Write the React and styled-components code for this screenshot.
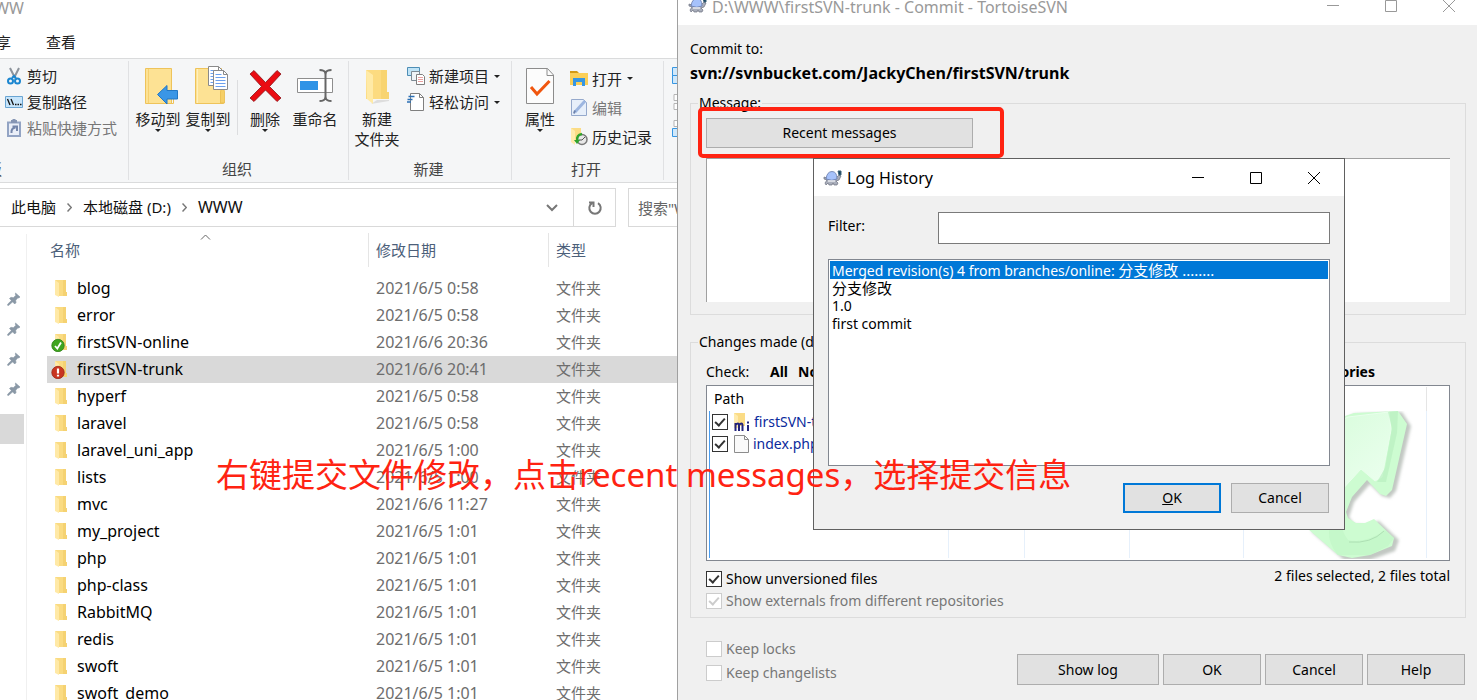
import React from "react";
import styled, { createGlobalStyle, css } from "styled-components";

const LATIN = `"Noto Sans", "Noto Sans CJK SC", sans-serif`;

const Global = createGlobalStyle`
  *, *::before, *::after { box-sizing: border-box; }
  body { margin: 0; background: #fff; overflow: hidden; font: 15px/20px ${LATIN}; color: #000; }
  button, input, textarea { font: inherit; color: inherit; margin: 0; border-radius: 0; }
  button { padding: 0; border: 0; background: none; white-space: nowrap; }
`;

const Desktop = styled.div`
  position: relative;
  display: grid;
  grid-template-columns: 677fr 800fr;
  height: 100vh;
  overflow: hidden;
  white-space: nowrap;
`;

/* ---------- Explorer ---------- */

const Explorer = styled.section`
  display: flex;
  flex-direction: column;
  min-width: 0;
  overflow: hidden;
  background: #fff;
`;

const ExplorerTitle = styled.div`
  display: flex;
  justify-content: flex-end;
  width: 24px;
  height: 28px;
  font-size: 16px;
  line-height: 16px;
  color: #999;
  overflow: hidden;
`;

const Tabs = styled.nav`
  display: flex;
  align-items: flex-start;
  gap: 35px;
  height: 30px;
  padding-top: 4px;
  color: #222;
`;

const Tab = styled.button`
  display: flex;
  justify-content: flex-end;
  width: ${(p) => (p.$clipped ? "11px" : "auto")};
  overflow: hidden;
`;

const RibbonBar = styled.div`
  display: flex;
  flex: none;
  height: 125px;
  border-top: 1px solid #dadbdc;
  border-bottom: 1px solid #dadbdc;
  background: #f5f6f7;
  padding: 2px 0;
  overflow: hidden;
`;

const Group = styled.div`
  display: flex;
  flex-direction: column;
  flex: none;
  width: ${(p) => p.$w}px;
  border-right: 1px solid #e0e1e3;
`;

const GroupBody = styled.div`
  display: flex;
  flex: 1;
  padding-left: ${(p) => p.$pad || 0}px;
`;

const GroupLabel = styled.div`
  display: flex;
  justify-content: ${(p) => (p.$clipped ? "flex-end" : "center")};
  width: ${(p) => (p.$clipped ? "2px" : "auto")};
  padding: ${(p) => (p.$clipped ? "0 0 1px" : "0 3px 1px 0")};
  overflow: hidden;
  color: #444;
`;

const BigButton = styled.button`
  display: flex;
  flex-direction: column;
  align-items: center;
  align-self: flex-start;
  width: 50px;
  padding-top: 5px;
  color: #222;
  svg { flex: none; margin-bottom: 3px; }
`;

const Caret = styled.i`
  border: 3px solid transparent;
  border-top-color: #222;
  border-bottom: 0;
`;

const Divider = styled.i`
  width: 1px;
  height: 55px;
  margin: 19px 2px 0 4px;
  background: #dcdddf;
`;

const SmallColumn = styled.div`
  display: flex;
  flex-direction: column;
  padding: ${(p) => (p.$wide ? "3px 0 0 5px" : "2px 0 0 5px")};
`;

const SmallButton = styled.button`
  display: flex;
  align-items: center;
  gap: 4px;
  height: ${(p) => (p.$tall ? 29 : 26)}px;
  color: ${(p) => (p.$dim ? "#777" : "#222")};
  i { margin-left: 1px; }
`;

const ViewIcons = styled.div`
  display: flex;
  padding: 6px 0 0 8px;
`;

const AddressRow = styled.div`
  display: flex;
  flex: none;
  gap: 12px;
  height: 39px;
  margin-top: 5px;
`;

const Address = styled.div`
  display: flex;
  flex: none;
  width: 616px;
  border: 1px solid #d9d9d9;
  border-left: 0;
`;

const Crumbs = styled.div`
  display: flex;
  align-items: center;
  flex: 1;
  gap: 11px;
  padding-bottom: 1px;
  svg { flex: none; }
`;

const Crumb = styled.a`
  color: #111;
  text-decoration: none;
  font-size: ${(p) => (p.$latin ? 16 : 15)}px;
`;

const AddressButton = styled.button`
  display: grid;
  place-items: center;
  width: 42px;
  border-left: ${(p) => (p.$line ? "1px solid #d9d9d9" : "0")};
`;

const SearchBox = styled.input`
  flex: 1;
  min-width: 0;
  border: 1px solid #d9d9d9;
  border-right: 0;
  padding: 0 0 0 9px;
  background: #fff;
  &::placeholder { color: #666; opacity: 1; }
`;

const ExplorerBody = styled.div`
  display: flex;
  flex: 1;
  min-height: 0;
  overflow: hidden;
`;

const QuickAccess = styled.aside`
  flex: none;
  width: 27px;
  margin-top: 7px;
  border-right: 1px solid #f0f0f0;
`;

const Pins = styled.div`
  display: flex;
  flex-direction: column;
  padding: 50px 0 10px 7px;
  svg { margin: 8px 0; }
`;

const NavSelected = styled.div`
  width: 24px;
  height: 30px;
  background: #d9d9d9;
`;

const FileTable = styled.table`
  flex: 1;
  align-self: flex-start;
  margin-left: 20px;
  table-layout: fixed;
  width: 100px;
  border-collapse: separate;
  border-spacing: 0;
`;

const HeadCell = styled.th`
  width: ${(p) => p.$w || "auto"};
  padding: 6px 0 8px;
  font-weight: 400;
  text-align: left;
  color: #4c607a;
  position: relative;
  > svg { position: absolute; left: 153px; top: 7px; }
`;

const HeadLabel = styled.div`
  height: 34px;
  line-height: 34px;
  padding-left: ${(p) => (p.$first ? 3 : 7)}px;
  border-left: ${(p) => (p.$first ? 0 : 1)}px solid #e5e5e5;
`;

const FileRow = styled.tr`
  background: ${(p) => (p.$selected ? "#d9d9d9" : "transparent")};
`;

const FileCell = styled.td`
  height: 27px;
  padding: 0 0 0 8px;
  line-height: 27px;
  font-size: ${(p) => (p.$type ? 15 : 16)}px;
  color: #6d6d6d;
`;

const FileName = styled.div`
  display: flex;
  align-items: center;
  gap: 9px;
  margin-left: -4px;
  color: #000;
`;

/* ---------- Dialog parts ---------- */

const TitleBar = styled.header`
  display: flex;
  flex: none;
  gap: 2px;
  align-items: ${(p) => (p.$clipped ? "flex-start" : "center")};
  height: ${(p) => (p.$clipped ? 25 : 37)}px;
  padding-left: ${(p) => (p.$clipped ? 10 : 9)}px;
  padding-right: ${(p) => (p.$clipped ? 0 : 2)}px;
  background: #fff;
  color: ${(p) => (p.$clipped ? "#999" : "#000")};
  overflow: hidden;
  h1 {
    flex: 1;
    margin: 0 0 0 3px;
    font-size: 16px;
    font-weight: 400;
    line-height: ${(p) => (p.$clipped ? 14 : 24)}px;
  }
`;

const WindowButton = styled.button`
  display: grid;
  place-items: center;
  width: 56px;
  height: 12px;
`;

const CommitWindow = styled.section`
  position: relative;
  display: flex;
  flex-direction: column;
  min-width: 0;
  border-left: 1px solid #a0a0a0;
  background: #f0f0f0;
  font-size: 14px;
`;

const CommitBody = styled.div`
  padding: 12px 11px 0 12px;
`;

const CommitTarget = styled.div`
  line-height: 24px;
  margin-bottom: 8px;
  b {
    display: block;
    font-size: 16px;
  }
`;

const Frame = styled.fieldset`
  min-width: 0;
  margin: 0 0 ${(p) => p.$gap || 0}px;
  padding: ${(p) => p.$top}px 15px ${(p) => p.$bottom}px;
  border: 1px solid #dcdcdc;
  legend { margin-left: -8px; padding: 0 1px; line-height: 20px; }
`;

const PushButton = styled.button`
  width: ${(p) => p.$w || 98}px;
  height: ${(p) => p.$h || 30}px;
  border: ${(p) => (p.$primary ? "2px solid #0078d7" : "1px solid #adadad")};
  background: #e1e1e1;
`;

const MessageBox = styled.textarea`
  display: block;
  width: 100%;
  height: 144px;
  margin-top: 10px;
  border: 0;
  border-top: 1px solid #a0a0a0;
  border-left: 1px solid #a0a0a0;
  background: #fff;
  resize: none;
  outline: 0;
`;

const CheckRow = styled.div`
  display: flex;
  line-height: 20px;
  > span { flex: none; width: 64px; }
`;

const CheckLinks = styled.div`
  display: flex;
  gap: 10px;
  width: 605px;
  button { font-weight: 700; }
  button:last-child { margin-left: auto; }
`;

const PathList = styled.div`
  position: relative;
  display: flex;
  height: 176px;
  margin-top: 3px;
  border: 1px solid #828790;
  background: #fff;
  overflow: hidden;
`;

const Watermark = styled.svg`
  position: absolute;
  right: 34px;
  bottom: 1px;
`;

const PathTable = styled.table`
  position: relative;
  width: 100%;
  height: 174px;
  padding: 1px 0 2px 2px;
  table-layout: fixed;
  border-collapse: separate;
  border-spacing: 0;
`;

const PathHead = styled.th`
  width: ${(p) => (p.$w ? p.$w + "px" : "auto")};
  height: 24px;
  padding: 0 0 0 5px;
  text-align: left;
  font-weight: 400;
  border-right: ${(p) => (p.$w ? "1px solid #e5e5e5" : "0")};
`;

const PathCell = styled.td`
  height: 22px;
  padding: 0 0 0 ${(p) => (p.$first ? 2 : 6)}px;
  border-left: ${(p) => (p.$first ? "1px solid #4a9df0" : "0")};
  border-right: ${(p) => (p.$last ? "0" : "1px solid #e6f0fb")};
`;

const FillerRow = styled.tr`
  td { height: auto; }
`;

const Check = styled.label`
  display: flex;
  align-items: center;
  gap: 4px;
  height: ${(p) => p.$h || 22}px;
  color: ${(p) => (p.$off ? "#777" : p.$link ? "#0a2a9c" : "#000")};
  svg { flex: none; margin-left: 2px; }
`;

const Tick = styled.input.attrs({ type: "checkbox" })`
  appearance: none;
  position: relative;
  flex: none;
  width: 16px;
  height: 16px;
  border: 1px solid #333;
  background: #fff;
  &:checked::after {
    content: "";
    position: absolute;
    left: 4px;
    top: 1px;
    width: 6px;
    height: 10px;
    border: solid #333;
    border-width: 0 2px 2px 0;
    transform: rotate(42deg);
  }
  &:disabled { border-color: #ccc; }
  &:disabled::after { border-color: #ccc; }
`;

const FrameFooter = styled.div`
  display: flex;
  justify-content: space-between;
  align-items: flex-start;
  padding-top: 7px;
`;

const Summary = styled.div`
  line-height: 16px;
`;

const Actions = styled.div`
  display: flex;
  gap: 4px;
  padding-top: 17px;
`;

const BottomBar = styled.div`
  display: flex;
  justify-content: space-between;
  padding: 19px 1px 0 16px;
`;

const Highlight = styled.div`
  position: absolute;
  left: 20px;
  top: 107px;
  width: 306px;
  height: 51px;
  border: 4px solid #ff2312;
  border-radius: 5px;
  pointer-events: none;
`;

const LogDialog = styled.section`
  position: absolute;
  left: 135px;
  top: 158px;
  width: 532px;
  border: 1px solid #606060;
  background: #f0f0f0;
`;

const LogBody = styled.div`
  padding: 16px 14px;
`;

const FilterRow = styled.div`
  display: flex;
  align-items: flex-start;
  label { flex: 1; line-height: 28px; }
  input {
    width: 392px;
    height: 32px;
    border: 1px solid #7a7a7a;
    background: #fff;
  }
`;

const LogList = styled.ul`
  height: 207px;
  margin: 15px 0 17px;
  padding: 1px;
  border: 1px solid #828790;
  background: #fff;
  list-style: none;
`;

const LogItem = styled.li`
  height: 18px;
  padding-left: 2px;
  line-height: 18px;
  span { font-size: 15px; }
  ${(p) =>
    p.$selected &&
    css`
      background: #0078d7;
      color: #fff;
    `}
`;

const LogActions = styled.div`
  display: flex;
  justify-content: flex-end;
  gap: 10px;
  padding-right: 1px;
`;

const Caption = styled.p`
  position: absolute;
  left: 216px;
  top: 455px;
  margin: 0;
  font-size: 33px;
  line-height: 40px;
  color: #ff2312;
`;

/* ---------- Icons ---------- */

const Chevron = () => (
  <svg width="5" height="9" viewBox="0 0 5 9" fill="none" stroke="#777" strokeWidth="1.5"><path d="M.5.5 4.300 4.500.5 8.500" /></svg>
);

const Folder = ({ badge }) => (
  <svg width="17" height="19" viewBox="0 0 17 19">
    <path d="M4 1h11v12h1v4H8z" fill="#fadb82" />
    <path d="M12 1h3v12h1v4h-4z" fill="#f5d272" />
    <path d="M4 1l4 3v14l-4-2z" fill="#ffe9a6" />
    {badge && <circle cx="7" cy="12.500" r="6.200" fill={badge === "ok" ? "#3fa51f" : "#c93420"} stroke={badge === "ok" ? "#2c7d14" : "#982817"} strokeWidth=".8" />}
    {badge === "ok" && <path d="M4 13l2.300 2.500L10 9.500" fill="none" stroke="#fff" strokeWidth="1.800" />}
    {badge === "modified" && <path d="M7 8.500v5M7 14.700v1.700" stroke="#fff" strokeWidth="2.200" />}
  </svg>
);

const Pin = () => (
  <svg width="14" height="14" viewBox="0 0 14 14" fill="#8a98a6" stroke="#8a98a6" strokeWidth=".6">
    <path d="M8.500 1l4.500 4-1.200 1-.8-.3-2.300 2.500.3 2.500-1.300 1.300L2.500 6.500 4 5.300l2.300.4 2.500-2.300-.4-1z" />
    <path d="M5 8l1.300 1.300L1.500 13.500l-.9-.2.2-1.300z" />
  </svg>
);

const BigFolder = ({ children }) => (
  <svg width="42" height="40" viewBox="0 0 42 40">{children}</svg>
);

const FolderBody = () => (
  <>
    <path d="M8.500 2.500h26v30h2v5h-28z" fill="#fde294" stroke="#eec35a" />
    <path d="M10.500 3v34" stroke="#fff0bd" />
    <path d="M33.500 37v-11q0-3 2-3t2 3v11z" fill="#f6cf66" stroke="#e9bb4c" strokeWidth=".8" />
  </>
);

const Sheet = ({ x, y }) => (
  <g transform={`translate(${x} ${y})`}>
    <path d="M.5.500h10l4 4v15H.5z" fill="#fff" stroke="#8a8a8a" />
    <path d="M10.500.5v4h4" fill="none" stroke="#8a8a8a" />
    <path d="M2.500 4.500h6M2.500 7.500h10M2.500 10.500h10M2.500 13.500h10M2.500 16.500h10" stroke="#6ba0ee" />
  </g>
);

const MoveIcon = () => (
  <BigFolder>
    <path d="M8.500 2.500h26v35h-26z" fill="#fde294" stroke="#eec35a" /><path d="M11.500 3v34" stroke="#f6d06f" />
    <path d="M36.500 24v13.500h-3" fill="none" stroke="#eec35a" />
    <path d="M20.500 28.500l9.500-9v5h10.500v8.500H30v5z" fill="#3a96e6" stroke="#2277c4" />
  </BigFolder>
);

const CopyIcon = () => (
  <BigFolder>
    <FolderBody />
    <Sheet x={21} y={0} />
    <Sheet x={26} y={4} />
  </BigFolder>
);

const DeleteIcon = () => (
  <svg width="36" height="40" viewBox="0 0 36 40">
    <path d="M3 8l4-3.500 11.500 12L30 4.500 34 8 22.500 20.500 34 32l-4 3.500L18.500 24 7 35.500 3 32l11.500-11.500z" fill="#ea0c12" stroke="#8d1015" strokeWidth=".8" />
  </svg>
);

const RenameIcon = () => (
  <svg width="38" height="40" viewBox="0 0 38 40" fill="none">
    <path d="M1.500 12.500h35v14h-35z" fill="#fff" stroke="#8e8e8e" />
    <path d="M4 15h18v9H4z" fill="#2f93e6" />
    <path d="M29.500 5v29" stroke="#666" strokeWidth="2" />
    <path d="M23.500 4q5 0 6 3 1-3 6-3M23.500 35q5 0 6-3 1 3 6 3" stroke="#666" strokeWidth="2" />
  </svg>
);

const NewFolderIcon = () => (
  <svg width="28" height="40" viewBox="0 0 28 40">
    <path d="M8 38l6-4h12v1z" fill="#ddd" />
    <path d="M3 4h21v22l2 2v5H3z" fill="#fcdb80" />
    <path d="M18 4h6v22h2v7h-8z" fill="#f8d471" />
    <path d="M3 4l7 5v29l-6-5z" fill="#ffeaa6" />
  </svg>
);

const PropertiesIcon = () => (
  <svg width="30" height="40" viewBox="0 0 30 40" fill="none">
    <path d="M1.500 2.500h21l6 6.500v28.500h-27z" fill="#fcfcfc" stroke="#8c8c8c" />
    <path d="M22 2.500V9.500h6.500" stroke="#8c8c8c" />
    <path d="M6 21l6 7L24.500 15" stroke="#f0560f" strokeWidth="3" />
  </svg>
);

const CutIcon = () => (
  <svg width="18" height="18" viewBox="0 0 18 18" fill="none">
    <path d="M5 1l5 10M14 1L9 11" stroke="#8d949c" strokeWidth="2" />
    <circle cx="5.500" cy="14" r="2.500" stroke="#1b86d0" strokeWidth="2" />
    <circle cx="12.500" cy="14" r="2.500" stroke="#1b86d0" strokeWidth="2" />
    <path d="M7 11l2-2 2 2" stroke="#1b86d0" strokeWidth="2" />
  </svg>
);

const CopyPathIcon = () => (
  <svg width="18" height="12" viewBox="0 0 18 12" fill="none">
    <path d="M.5.500h17v11H.5z" fill="#c7e5fb" stroke="#6aa5d3" />
    <path d="M2.500 3l2.500 6M6 3l2.500 6M10 8.500h1.500M12.500 8.500H14M15 8.500h1.500" stroke="#111" strokeWidth="1.300" />
  </svg>
);

const PasteLinkIcon = () => (
  <svg width="18" height="20" viewBox="0 0 18 20" fill="none">
    <path d="M3 4.500h12V18H3z" fill="#e9eef8" stroke="#93a4c4" strokeWidth="2" />
    <path d="M6 3.500h6M9 1v4" stroke="#8595b4" strokeWidth="3" />
    <path d="M6.500 15q-.5-5 4-5.500M7.500 8.500H12V13" stroke="#7486ab" strokeWidth="2" />
  </svg>
);

const NewItemIcon = () => (
  <svg width="18" height="18" viewBox="0 0 18 18" fill="none">
    <path d="M.5.500h12v8H.5z" fill="#bfe3f6" stroke="#4d8db5" />
    <path d="M4.500 4.500h8v9h-8z" fill="#eef3f7" stroke="#7d8a94" />
    <path d="M9.500 7.500h6l2 2v8h-8z" fill="#fff" stroke="#7f7f7f" />
    <path d="M11 10.500h5M11 12.500h5M11 14.500h5" stroke="#e8a0a0" />
  </svg>
);

const EasyAccessIcon = () => (
  <svg width="18" height="18" viewBox="0 0 18 18" fill="none">
    <path d="M3.500.500h9l4 4v13h-13z" fill="#fff" stroke="#7f7f7f" />
    <path d="M12.500.5v4h4" stroke="#7f7f7f" />
    <path d="M1.500 3.500h6M.5 6.500h5M0 9h4" stroke="#2a6fb5" strokeWidth="1.500" />
  </svg>
);

const OpenIcon = () => (
  <svg width="18" height="17" viewBox="0 0 18 17">
    <path d="M0 1h7l2 2H0z" fill="#d39a16" />
    <path d="M0 3h18v12H0z" fill="#fbcf57" />
    <path d="M3 16V8h12v8h-3v-4H6v4z" fill="#3796e2" />
  </svg>
);

const EditIcon = () => (
  <svg width="18" height="19" viewBox="0 0 18 19" fill="none">
    <path d="M1.500 1.500h12l3 3v13h-15z" fill="#e7effa" stroke="#95a9cc" />
    <path d="M5 14L15 3" stroke="#9db6e0" strokeWidth="3" />
    <path d="M4 15.500l1-3" stroke="#6c82ad" strokeWidth="2" />
  </svg>
);

const HistoryIcon = () => (
  <svg width="18" height="19" viewBox="0 0 18 19" fill="none">
    <path d="M1 1h10v14H1z" fill="#fbdc86" />
    <path d="M1 1l4 3v14l-4-3z" fill="#ffebac" />
    <circle cx="12" cy="12.500" r="5" fill="#e8e8e8" stroke="#7a7a7a" strokeWidth="1.500" />
    <path d="M12 13l3-3M12 13h-3" stroke="#555" />
    <path d="M12 7q-6 1-4.500 6.500" stroke="#2fa32c" strokeWidth="2.500" />
    <path d="M4 13h6l-3 4z" fill="#2fa32c" />
  </svg>
);

const PaneIcons = () => (
  <svg width="12" height="76" viewBox="0 0 12 76" fill="#cfe8fb" stroke="#3796e2">
    <path d="M.5.500h14v8H.5zM.5 8.500h14v8H.5z" />
    <path d="M2 27.500h12v6H2zM2 36.500h12v6H2z" fill="#fff" stroke="#b5b5b5" />
    <path d="M2 53.500h12v6H2z" fill="#fff" stroke="#b5b5b5" />
    <path d="M.5 61.500h14v8H.5z" />
  </svg>
);

const Turtle = ({ clipped }) => (
  <svg width="19" height={clipped ? 13 : 16} viewBox={clipped ? "0 3 19 13" : "0 0 19 16"}>
    <path d="M1 7l3 1 10-1 2-2 2 1-2 4-3 1 2 2-1 2h-3l-1-2-1 2H6l-1-2-2 2-1-2 2-3-3-1z" fill="#a9aebb" stroke="#6b7080" strokeWidth=".7" />
    <path d="M3 9Q4 1.500 9 1.500T14 9q-5 2.500-11 0z" fill="#a6c2fb" stroke="#6478a8" strokeWidth=".8" />
    <path d="M5 11h7" stroke="#e8eaef" strokeWidth="1.500" />
    <path d="M15 1h3v4h-2z" fill="#16445f" stroke="#3b6076" />
  </svg>
);

const WindowControls = ({ color }) => (
  <>
    <WindowButton aria-label="Minimize"><svg width="12" height="12"><path d="M0 5.500h12" stroke={color} /></svg></WindowButton>
    <WindowButton aria-label="Maximize"><svg width="12" height="12"><path d="M.5.500h11v11H.5z" fill="none" stroke={color} /></svg></WindowButton>
    <WindowButton aria-label="Close"><svg width="12" height="12"><path d="M0 0l12 12M12 0L0 12" stroke={color} /></svg></WindowButton>
  </>
);

const MergeFolder = () => (
  <svg width="16" height="19" viewBox="0 0 16 19" fill="none">
    <path d="M0 0h11v13H0z" fill="#fbdc86" />
    <path d="M0 0l4 3v12H0z" fill="#ffebac" />
    <path d="M1.500 18v-8M1.500 12q3-3 3.500 0v6M5 12q3-3 3.500 0v6M14 12v6M14 8.500v2" stroke="#23237c" strokeWidth="2" />
  </svg>
);

const PageIcon = () => (
  <svg width="15" height="18" viewBox="0 0 15 18" fill="#fafafa" stroke="#8c8c8c">
    <path d="M.5.500h10l4 4v13H.5z" /><path d="M10.500.5v4h4" fill="none" />
  </svg>
);

const ArrowMark = () => (
  <Watermark width="140" height="148" viewBox="1275 411 140 148" aria-hidden="true">
    <defs>
      <linearGradient id="face" x1="0" y1="0" x2="1" y2="1">
        <stop offset="0" stopColor="#d4fcd8" /><stop offset="1" stopColor="#edfff0" />
      </linearGradient>
      <filter id="soft" x="-10%" y="-10%" width="130%" height="130%"><feGaussianBlur stdDeviation="1.500" /></filter>
    </defs>
    <path d="M1300 440L1352 413 1400 411 1409 425 1394 490 1388 497 1380 495 1368 483 1352 501 1347 516 1352 523 1363 524 1377 520 1397 539 1393 550 1368 559 1342 559 1310 531z" fill="#c2c8c3" filter="url(#soft)" transform="translate(2 1)" />
    <path d="M1300 440L1345 416 1354 413 1398 411 1407 424 1392 490 1386 496 1380 494 1367 480 1352 497 1346 512 1348 518 1356 523 1365 523 1374 519 1394 538 1392 546 1370 555 1352 558 1338 555 1308 529z" fill="#cdfcd1" />
    <path d="M1300 440L1348 417 1389 412 1391 430 1382 477 1375 481 1361 469 1340 492z" fill="url(#face)" stroke="#e9ffec" />
    <path d="M1398 411l-1 22-11 49-9 0 8-14 7-40-4-16z" fill="#b9efc0" opacity=".7" />
    <path d="M1345 510q-8 15 3 30 18 4 37-10l9 8-6 8-18 9-32 0q-12-14-8-30z" fill="#bff5c5" opacity=".6" />
    <path d="M1349 542q22 2 35-11" fill="none" stroke="#aee0b4" />
  </Watermark>
);

const files = [
  ["blog", "2021/6/5 0:58"], ["error", "2021/6/5 0:58"], ["firstSVN-online", "2021/6/6 20:36", "ok"],
  ["firstSVN-trunk", "2021/6/6 20:41", "modified"], ["hyperf", "2021/6/5 0:58"], ["laravel", "2021/6/5 0:58"],
  ["laravel_uni_app", "2021/6/5 1:00"], ["lists", "2021/6/5 1:00"], ["mvc", "2021/6/6 11:27"],
  ["my_project", "2021/6/5 1:01"], ["php", "2021/6/5 1:01"], ["php-class", "2021/6/5 1:01"],
  ["RabbitMQ", "2021/6/5 1:01"], ["redis", "2021/6/5 1:01"], ["swoft", "2021/6/5 1:01"], ["swoft_demo", "2021/6/5 1:01"],
];

const Ribbon = () => (
  <RibbonBar>
    <Group $w={129}>
      <GroupBody>
        <SmallColumn>
          <SmallButton><CutIcon />剪切</SmallButton>
          <SmallButton><CopyPathIcon />复制路径</SmallButton>
          <SmallButton $dim><PasteLinkIcon />粘贴快捷方式</SmallButton>
        </SmallColumn>
      </GroupBody>
      <GroupLabel $clipped>剪贴板</GroupLabel>
    </Group>
    <Group $w={220}>
      <GroupBody $pad={4}>
        <BigButton><MoveIcon />移动到<Caret /></BigButton>
        <BigButton><CopyIcon />复制到<Caret /></BigButton>
        <Divider />
        <BigButton><DeleteIcon />删除<Caret /></BigButton>
        <BigButton><RenameIcon />重命名</BigButton>
      </GroupBody>
      <GroupLabel>组织</GroupLabel>
    </Group>
    <Group $w={163}>
      <GroupBody $pad={3}>
        <BigButton><NewFolderIcon />新建<br />文件夹</BigButton>
        <SmallColumn>
          <SmallButton><NewItemIcon />新建项目<Caret /></SmallButton>
          <SmallButton><EasyAccessIcon />轻松访问<Caret /></SmallButton>
        </SmallColumn>
      </GroupBody>
      <GroupLabel>新建</GroupLabel>
    </Group>
    <Group $w={152}>
      <GroupBody $pad={3}>
        <BigButton><PropertiesIcon />属性<Caret /></BigButton>
        <SmallColumn $wide>
          <SmallButton $tall><OpenIcon />打开<Caret /></SmallButton>
          <SmallButton $tall $dim><EditIcon />编辑</SmallButton>
          <SmallButton $tall><HistoryIcon />历史记录</SmallButton>
        </SmallColumn>
      </GroupBody>
      <GroupLabel>打开</GroupLabel>
    </Group>
    <ViewIcons><PaneIcons /></ViewIcons>
  </RibbonBar>
);

const ExplorerPane = () => (
  <Explorer>
    <ExplorerTitle>WWW</ExplorerTitle>
    <Tabs><Tab $clipped>共享</Tab><Tab>查看</Tab></Tabs>
    <Ribbon />
    <AddressRow>
      <Address>
        <Crumbs>
          <span />
          <Crumb href="#pc">此电脑</Crumb><Chevron />
          <Crumb href="#d">本地磁盘 (D:)</Crumb><Chevron />
          <Crumb href="#www" $latin>WWW</Crumb>
        </Crumbs>
        <AddressButton aria-label="Previous locations">
          <svg width="12" height="8" fill="none" stroke="#777" strokeWidth="2"><path d="M1 1l5 5 5-5" /></svg>
        </AddressButton>
        <AddressButton $line aria-label="Refresh">
          <svg width="16" height="16" viewBox="0 0 16 16" fill="none" stroke="#777" strokeWidth="2"><path d="M5 3.200a5.700 5.700 0 1 0 6 0M2 2.500h4.500V7" /></svg>
        </AddressButton>
      </Address>
      <SearchBox aria-label="搜索" placeholder={'搜索"WWW"'} />
    </AddressRow>
    <ExplorerBody>
      <QuickAccess>
        <Pins><Pin /><Pin /><Pin /><Pin /></Pins>
        <NavSelected />
      </QuickAccess>
      <FileTable>
        <thead>
          <tr>
            <HeadCell $w="321px">
              <svg width="11" height="6" fill="none" stroke="#666"><path d="M1 5.500l4.500-4.500L10 5.500" /></svg>
              <HeadLabel $first>名称</HeadLabel>
            </HeadCell>
            <HeadCell $w="180px"><HeadLabel>修改日期</HeadLabel></HeadCell>
            <HeadCell><HeadLabel>类型</HeadLabel></HeadCell>
          </tr>
        </thead>
        <tbody>
          {files.map(([name, date, badge]) => (
            <FileRow key={name} $selected={badge === "modified"}>
              <FileCell><FileName><Folder badge={badge} />{name}</FileName></FileCell>
              <FileCell>{date}</FileCell>
              <FileCell $type>文件夹</FileCell>
            </FileRow>
          ))}
        </tbody>
      </FileTable>
    </ExplorerBody>
  </Explorer>
);

const PathCells = () => (
  <><PathCell /><PathCell /><PathCell /><PathCell /><PathCell $last /></>
);

const Log = () => (
  <LogDialog role="dialog" aria-label="Log History">
    <TitleBar><Turtle /><h1>Log History</h1><WindowControls color="#000" /></TitleBar>
    <LogBody>
      <FilterRow><label htmlFor="filter">Filter:</label><input id="filter" type="text" /></FilterRow>
      <LogList role="listbox" aria-label="Messages">
        <LogItem role="option" aria-selected $selected>Merged revision(s) 4 from branches/online: <span>分支修改 ........</span></LogItem>
        <LogItem role="option"><span>分支修改</span></LogItem>
        <LogItem role="option">1.0</LogItem>
        <LogItem role="option">first commit</LogItem>
      </LogList>
      <LogActions>
        <PushButton $primary><u>O</u>K</PushButton>
        <PushButton>Cancel</PushButton>
      </LogActions>
    </LogBody>
  </LogDialog>
);

const Commit = () => (
  <CommitWindow>
    <TitleBar $clipped><Turtle clipped /><h1>D:\WWW\firstSVN-trunk - Commit - TortoiseSVN</h1><WindowControls color="#999" /></TitleBar>
    <CommitBody>
      <CommitTarget>Commit to:<b>svn://svnbucket.com/JackyChen/firstSVN/trunk</b></CommitTarget>
      <Frame $top={5} $bottom={12} $gap={17}>
        <legend>Message:</legend>
        <PushButton $w={267}>Recent messages</PushButton>
        <MessageBox aria-label="Message" />
      </Frame>
      <Frame $top={10} $bottom={5}>
        <legend>Changes made (double-click on file for diff):</legend>
        <CheckRow>
          <span>Check:</span>
          <CheckLinks>
            <button>All</button><button>None</button><button>Versioned</button><button>Added</button>
            <button>Deleted</button><button>Modified</button><button>Files</button><button>Directories</button>
          </CheckLinks>
        </CheckRow>
        <PathList>
          <ArrowMark />
          <PathTable>
            <thead>
              <tr>
                <PathHead $w={240}>Path</PathHead><PathHead $w={76}>Extension</PathHead><PathHead $w={105}>Status</PathHead>
                <PathHead $w={114}>Property status</PathHead><PathHead $w={183}>Lock</PathHead><PathHead />
              </tr>
            </thead>
            <tbody>
              <tr><PathCell $first><Check $link><Tick defaultChecked /><MergeFolder />firstSVN-trunk</Check></PathCell><PathCells /></tr>
              <tr><PathCell $first><Check $link><Tick defaultChecked /><PageIcon />index.php</Check></PathCell><PathCells /></tr>
              <FillerRow><PathCell $first /><PathCells /></FillerRow>
            </tbody>
          </PathTable>
        </PathList>
        <FrameFooter>
          <div>
            <Check><Tick defaultChecked />Show unversioned files</Check>
            <Check $off><Tick defaultChecked disabled />Show externals from different repositories</Check>
          </div>
          <Summary>2 files selected, 2 files total</Summary>
        </FrameFooter>
      </Frame>
      <BottomBar>
        <div>
          <Check $off $h={24}><Tick disabled />Keep locks</Check>
          <Check $off $h={24}><Tick disabled />Keep changelists</Check>
        </div>
        <Actions>
          <PushButton $w={142} $h={31}>Show log</PushButton>
          <PushButton $h={31}>OK</PushButton>
          <PushButton $h={31}>Cancel</PushButton>
          <PushButton $h={31}>Help</PushButton>
        </Actions>
      </BottomBar>
    </CommitBody>
    <Highlight />
    <Log />
  </CommitWindow>
);

export default function App() {
  return (
    <Desktop>
      <Global />
      <ExplorerPane />
      <Commit />
      <Caption>右键提交文件修改，点击recent messages，选择提交信息</Caption>
    </Desktop>
  );
}
